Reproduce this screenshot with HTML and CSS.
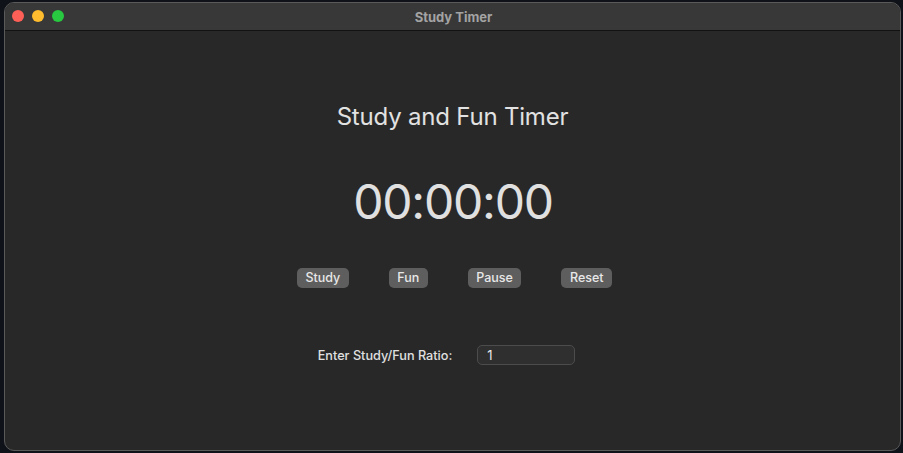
FILE: index.html
```html
<!DOCTYPE html>
<html>
<head>
<meta charset="utf-8">
<link rel="stylesheet" href="styles.css">
</head>
<body>
<div class="window">
  <div class="titlebar">
    <div class="lights">
      <span class="light red"></span>
      <span class="light yellow"></span>
      <span class="light green"></span>
    </div>
    <div class="title">Study Timer</div>
  </div>
  <div class="content">
    <h1 class="heading">Study and Fun Timer</h1>
    <div class="clock">00:00:00</div>
    <div class="buttons">
      <button class="btn">Study</button>
      <button class="btn">Fun</button>
      <button class="btn">Pause</button>
      <button class="btn">Reset</button>
    </div>
    <div class="ratio">
      <label class="ratio-label">Enter Study/Fun Ratio:</label>
      <input class="ratio-input" type="text" value="1">
    </div>
  </div>
</div>
</body>
</html>
```

FILE: styles.css
```css
html, body {
  margin: 0;
  padding: 0;
  width: 903px;
  height: 453px;
  background: #0f1218;
  overflow: hidden;
  font-family: Inter, "Helvetica Neue", "Liberation Sans", sans-serif;
}
.window {
  box-sizing: border-box;
  margin: 2px 2px 0 4px;
  width: 897px;
  height: 449px;
  border-radius: 10px;
  background: #282828;
  border: 1px solid #5a5a5a;
  display: flex;
  flex-direction: column;
  overflow: hidden;
}
.titlebar {
  position: relative;
  height: 27px;
  background: #383838;
  border-bottom: 1px solid #121212;
  display: flex;
  align-items: center;
  justify-content: center;
  flex-shrink: 0;
}
.lights {
  position: absolute;
  left: 7px;
  top: 7px;
  display: flex;
  gap: 8px;
}
.light {
  width: 12px;
  height: 12px;
  border-radius: 50%;
  display: block;
}
.red { background: #fe5f57; }
.yellow { background: #febc2e; }
.green { background: #28c840; }
.title {
  font-size: 13px;
  font-weight: 700;
  color: #a3a3a3;
  margin-left: 2px;
}
.content {
  flex: 1;
  display: flex;
  flex-direction: column;
  align-items: center;
  padding-top: 71px;
}
.heading {
  margin: 0;
  font-size: 24px;
  font-weight: 400;
  color: #e2e2e2;
  line-height: 30px;
  letter-spacing: -0.2px;
}
.clock {
  margin-top: 40px;
  font-size: 48px;
  font-weight: 400;
  color: #e0e0e0;
  line-height: 60px;
  letter-spacing: -1.2px;
  padding-left: 1px;
}
.buttons {
  margin-top: 36px;
  display: flex;
  gap: 40px;
  padding-left: 4px;
}
.btn {
  height: 20px;
  padding: 0 8.5px;
  border: none;
  border-radius: 5px;
  background: #5e5e5e;
  color: #e8e8e8;
  font-family: Inter, "Liberation Sans", sans-serif;
  font-size: 12.5px;
  font-weight: 500;
  line-height: 20px;
}
.ratio {
  margin-top: 57px;
  display: flex;
  align-items: center;
  gap: 25px;
  padding-right: 12px;
}
.ratio-label {
  font-size: 12.7px;
  font-weight: 500;
  color: #e0e0e0;
}
.ratio-input {
  box-sizing: border-box;
  width: 98px;
  height: 20px;
  background: #2f2f2f;
  border: 1px solid #4c4c4c;
  border-radius: 5px;
  color: #e8e8e8;
  font-family: Inter, "Liberation Sans", sans-serif;
  font-size: 13px;
  padding: 0 9px;
  outline: none;
}
```
